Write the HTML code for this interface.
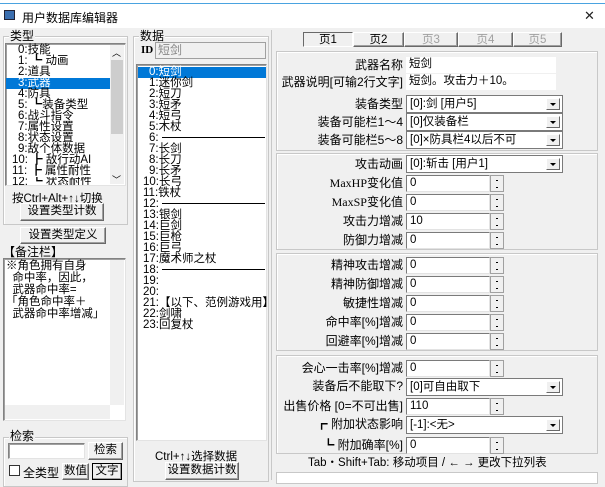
<!DOCTYPE html>
<html><head><meta charset="utf-8"><style>
*{box-sizing:border-box;margin:0;padding:0}
body{width:605px;height:480px;overflow:hidden;background:#f0f0f0;font-family:"Liberation Sans","Noto Sans CJK SC","WenQuanYi Zen Hei",sans-serif;font-size:12px;color:#000;position:relative}
.a{position:absolute;white-space:nowrap}
.grp{position:absolute;border:1px solid #c8c8c8;box-shadow:inset 1px 1px 0 #fff}
.lbl{position:absolute;background:#f0f0f0;padding:0 1px;line-height:12px}
.sunk{position:absolute;background:#fff;border:1px solid #828282;border-right-color:#e3e3e3;border-bottom-color:#e3e3e3;box-shadow:inset 1px 1px 0 #a0a0a0}
.btn{position:absolute;background:#f0f0f0;border:1px solid #fff;border-right-color:#696969;border-bottom-color:#696969;box-shadow:inset -1px -1px 0 #a0a0a0;text-align:center;line-height:14px;white-space:nowrap;font-size:11.5px;overflow:hidden}
.row{position:absolute;height:11px;line-height:11px;font-size:11.5px;white-space:nowrap}
.rl{position:absolute;right:202px;text-align:right;line-height:16px;white-space:nowrap}
.in{position:absolute;background:#fff;border:1px solid #7a7a7a;border-right-color:#e3e3e3;border-bottom-color:#e3e3e3;padding-left:3px;line-height:14px;font-size:11.5px;white-space:nowrap}
.spin{position:absolute;width:14px;background:#f0f0f0;border:1px solid #a0a0a0}
.spin:before{content:"";position:absolute;left:5px;top:4px;width:2px;height:1px;background:#000}
.spin:after{content:"";position:absolute;left:5px;top:11px;width:2px;height:1px;background:#000}
.dd{position:absolute;right:2px;top:2px;width:14px;height:12px;background:#f0f0f0;border:1px solid #fff;border-right-color:#696969;border-bottom-color:#696969}
.dd:after{content:"";position:absolute;left:3px;top:4px;border-left:3px solid transparent;border-right:3px solid transparent;border-top:3px solid #000}
.sep{position:absolute;height:1px;background:#000}
</style></head><body>
<div class="a" style="left:0;top:0;width:605px;height:28px;background:#fff"></div>
<div class="a" style="left:0;top:3px;width:605px;height:1px;background:#4aa3e0"></div>
<div class="a" style="left:4px;top:10px;width:11px;height:10px;background:#3b6fb0;border:1px solid #223"></div>
<div class="a" style="left:22px;top:9px;font-size:12px">用户数据库编辑器</div>
<div class="a" style="left:584px;top:8px;font-size:13px;color:#222">✕</div>

<!-- left group -->
<div class="grp" style="left:3px;top:36px;width:125px;height:189px"></div>
<div class="lbl" style="left:9px;top:30px">类型</div>
<div class="sunk" style="left:5px;top:43px;width:121px;height:143px"></div>
<div class="a" style="left:110px;top:45px;width:14px;height:139px;background:#f0f0f0"></div>
<div class="a" style="left:111px;top:60px;width:12px;height:74px;background:#cdcdcd"></div>
<div class="a" style="left:112px;top:46px;font-size:9px">︿</div>
<div class="a" style="left:112px;top:173px;font-size:9px">﹀</div>
<div class="a" style="left:6px;top:78px;width:104px;height:11px;background:#0078d7"></div>
<div class="row" style="left:18px;top:45px">0:技能</div>
<div class="row" style="left:18px;top:56px">1: ┗ 动画</div>
<div class="row" style="left:18px;top:67px">2:道具</div>
<div class="row" style="left:18px;top:78px;color:#fff">3:武器</div>
<div class="row" style="left:18px;top:89px">4:防具</div>
<div class="row" style="left:18px;top:100px">5: ┗装备类型</div>
<div class="row" style="left:18px;top:111px">6:战斗指令</div>
<div class="row" style="left:18px;top:122px">7:属性设置</div>
<div class="row" style="left:18px;top:133px">8:状态设置</div>
<div class="row" style="left:18px;top:144px">9:敌个体数据</div>
<div class="row" style="left:12px;top:155px">10: ┣ 敌行动AI</div>
<div class="row" style="left:12px;top:166px">11: ┣ 属性耐性</div>
<div class="row" style="left:12px;top:177px;height:8px;overflow:hidden">12: ┗ 状态耐性</div>
<div class="a" style="left:12px;top:190px;font-size:11.5px">按Ctrl+Alt+↑↓切换</div>
<div class="btn" style="left:20px;top:203px;width:84px;height:18px">设置类型计数</div>
<div class="btn" style="left:20px;top:227px;width:86px;height:17px">设置类型定义</div>
<div class="a" style="left:3px;top:243px">【备注栏】</div>
<div class="sunk" style="left:3px;top:258px;width:123px;height:163px"></div>
<div class="a" style="left:110px;top:260px;width:14px;height:145px;background:#f0f0f0"></div>
<div class="a" style="left:5px;top:405px;width:105px;height:14px;background:#f0f0f0"></div>
<div class="a" style="left:6px;top:260px;line-height:12px;font-size:11.5px">※角色拥有自身<br>&nbsp;&nbsp;命中率，因此，<br>&nbsp;&nbsp;武器命中率=<br>「角色命中率＋<br>&nbsp;&nbsp;武器命中率增减」</div>
<div class="grp" style="left:3px;top:437px;width:125px;height:50px"></div>
<div class="lbl" style="left:9px;top:430px">检索</div>
<div class="sunk" style="left:8px;top:443px;width:77px;height:16px"></div>
<div class="btn" style="left:88px;top:442px;width:35px;height:18px">检索</div>
<div class="a" style="left:9px;top:465px;width:11px;height:11px;background:#fff;border:1px solid #333"></div>
<div class="a" style="left:23px;top:464px">全类型</div>
<div class="btn" style="left:62px;top:463px;width:27px;height:17px">数值</div>
<div class="btn" style="left:92px;top:463px;width:30px;height:17px;border-color:#000">文字</div>

<!-- middle -->
<div class="grp" style="left:133px;top:36px;width:136px;height:446px"></div>
<div class="lbl" style="left:139px;top:30px">数据</div>
<div class="a" style="left:141px;top:44px;font-family:'Liberation Serif',serif;font-weight:bold;font-size:11px">ID</div>
<div class="a" style="left:155px;top:42px;width:111px;height:17px;background:#f0f0f0;border:1px solid #a0a0a0;color:#888;padding-left:2px;line-height:15px">短剑</div>
<div class="sunk" style="left:136px;top:64px;width:131px;height:377px"></div>
<div class="a" style="left:138px;top:67px;width:128px;height:11px;background:#0078d7"></div>
<div class="row" style="left:149px;top:67px;color:#fff">0:短剑</div>
<div class="row" style="left:149px;top:78px">1:迷你剑</div>
<div class="row" style="left:149px;top:89px">2:短刀</div>
<div class="row" style="left:149px;top:100px">3:短矛</div>
<div class="row" style="left:149px;top:111px">4:短弓</div>
<div class="row" style="left:149px;top:122px">5:木杖</div>
<div class="row" style="left:149px;top:133px">6:</div><div class="sep" style="left:162px;top:137px;width:103px"></div>
<div class="row" style="left:149px;top:144px">7:长剑</div>
<div class="row" style="left:149px;top:155px">8:长刀</div>
<div class="row" style="left:149px;top:166px">9:长矛</div>
<div class="row" style="left:143px;top:177px">10:长弓</div>
<div class="row" style="left:143px;top:188px">11:铁杖</div>
<div class="row" style="left:143px;top:199px">12:</div><div class="sep" style="left:162px;top:203px;width:103px"></div>
<div class="row" style="left:143px;top:210px">13:银剑</div>
<div class="row" style="left:143px;top:221px">14:巨剑</div>
<div class="row" style="left:143px;top:232px">15:巨枪</div>
<div class="row" style="left:143px;top:243px">16:巨弓</div>
<div class="row" style="left:143px;top:254px">17:魔术师之杖</div>
<div class="row" style="left:143px;top:265px">18:</div><div class="sep" style="left:162px;top:269px;width:103px"></div>
<div class="row" style="left:143px;top:276px">19:</div>
<div class="row" style="left:143px;top:287px">20:</div>
<div class="row" style="left:143px;top:298px">21:【以下、范例游戏用】</div>
<div class="row" style="left:143px;top:309px">22:剑啸</div>
<div class="row" style="left:143px;top:320px">23:回复杖</div>
<div class="a" style="left:155px;top:448px;font-size:11.5px">Ctrl+↑↓选择数据</div>
<div class="btn" style="left:165px;top:462px;width:74px;height:18px">设置数据计数</div>

<!-- right -->
<div class="a" style="left:271px;top:30px;width:1px;height:450px;background:#c8c8c8"></div>
<div class="btn" style="left:303px;top:32px;width:50px;height:15px;border-color:#696969 #fff #fff #696969;box-shadow:none">页1</div>
<div class="btn" style="left:353px;top:32px;width:51px;height:15px">页2</div>
<div class="btn" style="left:404px;top:32px;width:54px;height:15px;color:#a0a0a0">页3</div>
<div class="btn" style="left:458px;top:32px;width:55px;height:15px;color:#a0a0a0">页4</div>
<div class="btn" style="left:513px;top:32px;width:49px;height:15px;color:#a0a0a0">页5</div>

<div class="grp" style="left:276px;top:51px;width:322px;height:100px"></div>
<div class="rl" style="top:57px">武器名称</div>
<div class="in" style="left:406px;top:57px;width:150px;height:16px;border:none;background:#fff">短剑</div>
<div class="rl" style="top:74px">武器说明[可输2行文字]</div>
<div class="in" style="left:406px;top:74px;width:150px;height:16px;border:none;background:#fff">短剑。攻击力＋10。</div>
<div class="rl" style="top:96px">装备类型</div>
<div class="in" style="left:406px;top:95px;width:157px;height:18px;border:1px solid #7a7a7a;line-height:16px">[0]:剑 [用户5]<div class="dd"></div></div>
<div class="rl" style="top:114px">装备可能栏1～4</div>
<div class="in" style="left:406px;top:113px;width:157px;height:18px;border:1px solid #7a7a7a;line-height:16px">[0]仅装备栏<div class="dd"></div></div>
<div class="rl" style="top:132px">装备可能栏5～8</div>
<div class="in" style="left:406px;top:131px;width:157px;height:18px;border:1px solid #7a7a7a;line-height:16px">[0]×防具栏4以后不可<div class="dd"></div></div>

<div class="grp" style="left:276px;top:153px;width:322px;height:97px"></div>
<div class="rl" style="top:156px">攻击动画</div>
<div class="in" style="left:406px;top:155px;width:157px;height:18px;border:1px solid #7a7a7a;line-height:16px">[0]:斩击 [用户1]<div class="dd"></div></div>
<div class="rl" style="top:175px;font-family:'Liberation Serif',serif">MaxHP变化值</div>
<div class="in" style="left:406px;top:175px;width:84px;height:17px">0</div><div class="spin" style="left:490px;top:175px;height:17px"></div>
<div class="rl" style="top:194px;font-family:'Liberation Serif',serif">MaxSP变化值</div>
<div class="in" style="left:406px;top:194px;width:84px;height:17px">0</div><div class="spin" style="left:490px;top:194px;height:17px"></div>
<div class="rl" style="top:213px">攻击力增减</div>
<div class="in" style="left:406px;top:213px;width:84px;height:17px">10</div><div class="spin" style="left:490px;top:213px;height:17px"></div>
<div class="rl" style="top:232px">防御力增减</div>
<div class="in" style="left:406px;top:232px;width:84px;height:17px">0</div><div class="spin" style="left:490px;top:232px;height:17px"></div>

<div class="grp" style="left:276px;top:253px;width:322px;height:98px"></div>
<div class="rl" style="top:257px">精神攻击增减</div>
<div class="in" style="left:406px;top:257px;width:84px;height:17px">0</div><div class="spin" style="left:490px;top:257px;height:17px"></div>
<div class="rl" style="top:276px">精神防御增减</div>
<div class="in" style="left:406px;top:276px;width:84px;height:17px">0</div><div class="spin" style="left:490px;top:276px;height:17px"></div>
<div class="rl" style="top:295px">敏捷性增减</div>
<div class="in" style="left:406px;top:295px;width:84px;height:17px">0</div><div class="spin" style="left:490px;top:295px;height:17px"></div>
<div class="rl" style="top:314px">命中率[%]增减</div>
<div class="in" style="left:406px;top:314px;width:84px;height:17px">0</div><div class="spin" style="left:490px;top:314px;height:17px"></div>
<div class="rl" style="top:333px">回避率[%]增减</div>
<div class="in" style="left:406px;top:333px;width:84px;height:17px">0</div><div class="spin" style="left:490px;top:333px;height:17px"></div>

<div class="grp" style="left:276px;top:355px;width:322px;height:99px"></div>
<div class="rl" style="top:360px">会心一击率[%]增减</div>
<div class="in" style="left:406px;top:360px;width:84px;height:17px">0</div><div class="spin" style="left:490px;top:360px;height:17px"></div>
<div class="rl" style="top:378px">装备后不能取下?</div>
<div class="in" style="left:406px;top:378px;width:157px;height:18px;border:1px solid #7a7a7a;line-height:16px">[0]可自由取下<div class="dd"></div></div>
<div class="rl" style="top:398px">出售价格 [0=不可出售]</div>
<div class="in" style="left:406px;top:398px;width:84px;height:17px">110</div><div class="spin" style="left:490px;top:398px;height:17px"></div>
<div class="rl" style="top:416px">┏ 附加状态影响</div>
<div class="in" style="left:406px;top:416px;width:157px;height:18px;border:1px solid #7a7a7a;line-height:16px">[-1]:&lt;无&gt;<div class="dd"></div></div>
<div class="rl" style="top:437px">┗ 附加确率[%]</div>
<div class="in" style="left:406px;top:437px;width:84px;height:17px">0</div><div class="spin" style="left:490px;top:437px;height:17px"></div>

<div class="a" style="left:308px;top:454px;font-size:11.5px">Tab・Shift+Tab: 移动项目 / ← → 更改下拉列表</div>
<div class="grp" style="left:276px;top:472px;width:322px;height:12px;background:#fff"></div>
</body></html>
